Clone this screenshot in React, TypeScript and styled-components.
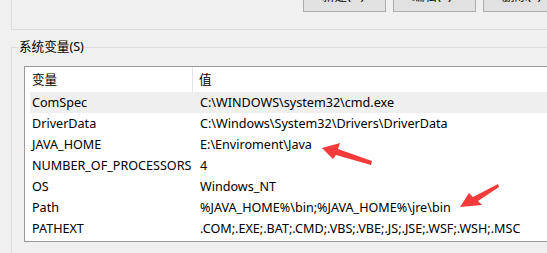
import styled, { createGlobalStyle } from 'styled-components';

const GlobalStyle = createGlobalStyle`
   html, body {
      margin: 0;
      padding: 0;
      background: #f0f0f0;
      overflow: hidden;
   }
   body {
      font-family: 'Noto Sans', 'Noto Sans CJK SC', sans-serif;
      font-size: 12.6px;
      color: #000;
   }
`;

type variable = {
   name: string;
   value: string;
};

const variables: variable[] = [
   { name: 'ComSpec', value: 'C:\\WINDOWS\\system32\\cmd.exe' },
   { name: 'DriverData', value: 'C:\\Windows\\System32\\Drivers\\DriverData' },
   { name: 'JAVA_HOME', value: 'E:\\Enviroment\\Java' },
   { name: 'NUMBER_OF_PROCESSORS', value: '4' },
   { name: 'OS', value: 'Windows_NT' },
   { name: 'Path', value: '%JAVA_HOME%\\bin;%JAVA_HOME%\\jre\\bin' },
   { name: 'PATHEXT', value: '.COM;.EXE;.BAT;.CMD;.VBS;.VBE;.JS;.JSE;.WSF;.WSH;.MSC' },
];

const Window = styled.div`
   position: relative;
   width: 580px;
   height: 253px;
   overflow: hidden;
`;

const UserPanel = styled.div`
   margin-left: 11px;
   height: 29px;
   border-left: 1px solid #dcdcdc;
   border-bottom: 1px solid #dcdcdc;
   display: flex;
   justify-content: flex-end;
   align-items: flex-end;
   padding-right: 14px;
`;

const ButtonRow = styled.div`
   display: flex;
   gap: 7px;
   margin-bottom: 17px;
`;

const Button = styled.div`
   box-sizing: content-box;
   width: 63px;
   height: 18px;
   padding: 0 0 6px 18px;
   border: 1px solid #adadad;
   background: #e1e1e1;
   display: flex;
   align-items: center;
   line-height: 12px;
   white-space: nowrap;
`;

const Group = styled.fieldset`
   margin: 9px 0 0 11px;
   padding: 0 0 0 12px;
   height: 300px;
   border: none;
   border-top: 1px solid #dcdcdc;
   border-left: 1px solid #dcdcdc;
   min-width: 0;
`;

const Legend = styled.legend`
   margin-left: -6px;
   padding: 0 1px;
   line-height: 16px;
`;

const ListBox = styled.div`
   margin-top: 11px;
   height: 174px;
   border: 1px solid #9a9a9a;
   background: #fff;
   padding-left: 5px;
   display: flex;
   flex-direction: column;
`;

const HeaderRow = styled.div`
   display: grid;
   grid-template-columns: 163px 1fr;
   height: 25px;
`;

const HeaderCell = styled.div<{ $divider?: boolean }>`
   padding-left: ${({ $divider }) => ($divider ? '2px' : '6px')};
   border-right: ${({ $divider }) => ($divider ? '1px solid #e5e5e5' : 'none')};
   line-height: 25px;
`;

const Row = styled.div<{ $selected?: boolean }>`
   display: grid;
   grid-template-columns: 170px 1fr;
   height: 21px;
   line-height: 21px;
   background: ${({ $selected }) => ($selected ? '#efefef' : 'transparent')};
   white-space: nowrap;
`;

const NameCell = styled.div`
   padding-left: 2px;
`;

const ValueCell = styled.div``;

const Annotations = styled.svg`
   position: absolute;
   left: 0;
   top: 0;
   pointer-events: none;
`;

const App: React.FC = () => {
   return (
      <Window>
         <GlobalStyle />
         <UserPanel>
            <ButtonRow>
               <Button>新建(N)...</Button>
               <Button>编辑(E)...</Button>
               <Button>删除(L)</Button>
            </ButtonRow>
         </UserPanel>
         <Group>
            <Legend>系统变量(S)</Legend>
            <ListBox>
               <HeaderRow>
                  <HeaderCell $divider>变量</HeaderCell>
                  <HeaderCell>值</HeaderCell>
               </HeaderRow>
               {variables.map((el, i) => (
                  <Row key={el.name} $selected={i === 0}>
                     <NameCell>{el.name}</NameCell>
                     <ValueCell>{el.value}</ValueCell>
                  </Row>
               ))}
            </ListBox>
         </Group>
         <Annotations width="547" height="253" viewBox="0 0 547 253">
            <polygon
               points="322,148 340,143 338,149 372,161 371,165 336,155 333,159"
               fill="#f43a3a"
            />
            <polygon
               points="460,207 469,193 473,197 498,184 499,187 478,201 482,205"
               fill="#f43a3a"
            />
         </Annotations>
      </Window>
   );
};

export default App;
